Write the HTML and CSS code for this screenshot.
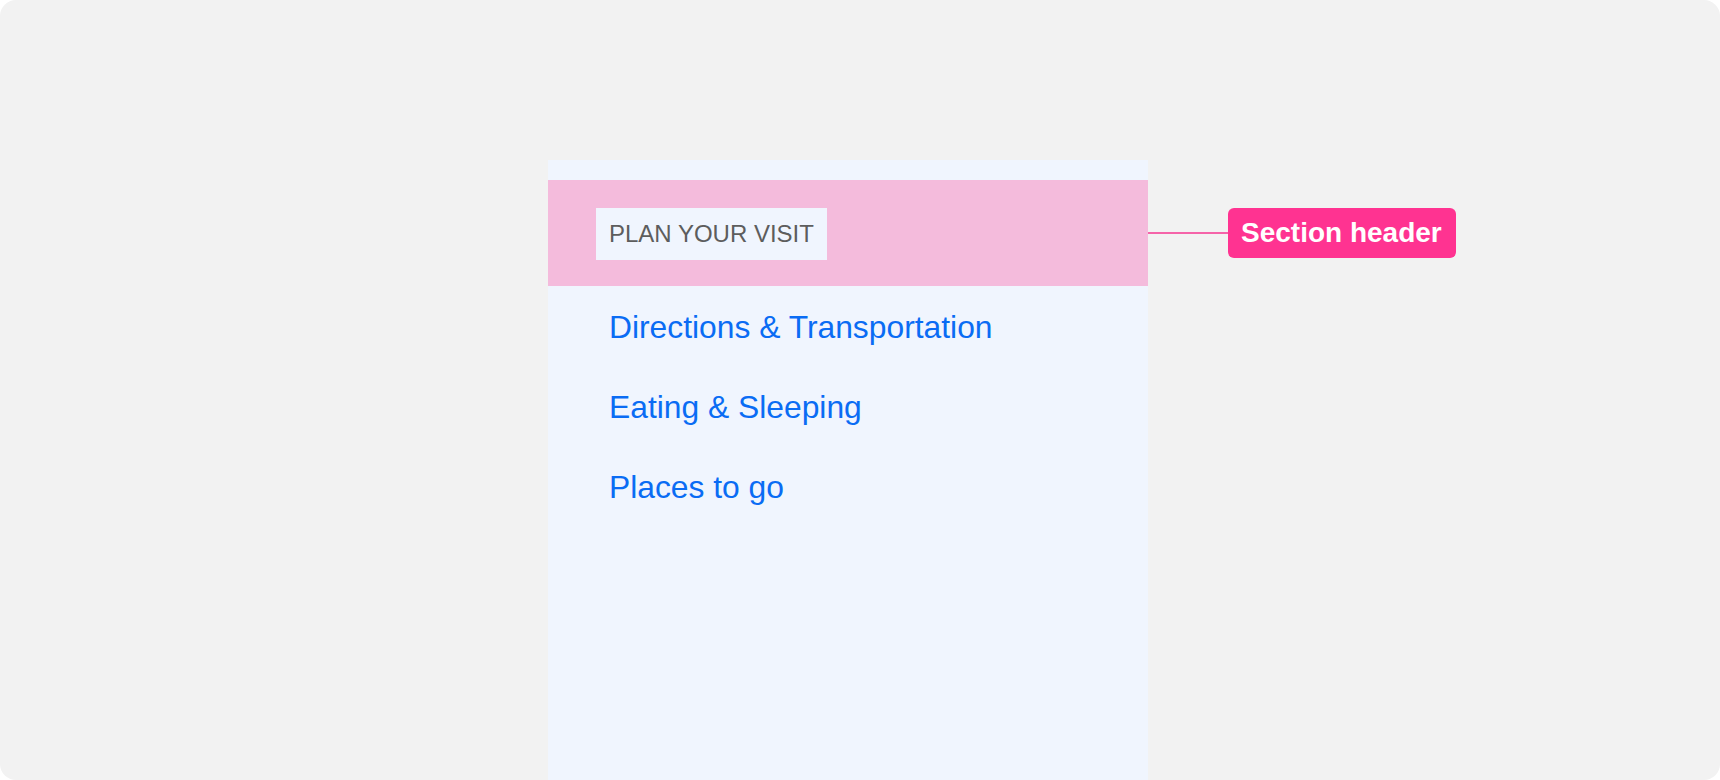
FILE: index.html
```html
<!DOCTYPE html>
<html lang="en">
<head>
<meta charset="utf-8">
<title>Section header</title>
<link rel="stylesheet" href="styles.css">
</head>
<body>
<div class="canvas">
  <div class="panel">
    <div class="section-header">
      <span class="section-label">PLAN YOUR VISIT</span>
    </div>
    <ul class="links">
      <li><a class="link" href="#">Directions &amp; Transportation</a></li>
      <li><a class="link" href="#">Eating &amp; Sleeping</a></li>
      <li><a class="link" href="#">Places to go</a></li>
    </ul>
    <div class="annotation">
      <span class="annotation-line"></span>
      <span class="annotation-badge">Section header</span>
    </div>
  </div>
</div>
</body>
</html>
```

FILE: styles.css
```css
* { box-sizing: border-box; }
html, body {
  margin: 0;
  padding: 0;
  background: #ffffff;
}
body {
  font-family: "Liberation Sans", Arial, sans-serif;
}
.canvas {
  width: 1720px;
  height: 780px;
  background: #f2f2f2;
  border-radius: 16px;
  overflow: hidden;
  padding: 160px 0 0 548px;
}
.panel {
  position: relative;
  width: 600px;
  height: 620px;
  background: #f0f5fe;
  padding-top: 20px;
}
.section-header {
  background: #f4bbdc;
  height: 106px;
  padding: 28px 0 0 48px;
}
.section-label {
  display: inline-block;
  background: #f0f5fe;
  color: #5d5d5d;
  font-size: 24px;
  line-height: 28px;
  padding: 12px 13px;
}
.links {
  list-style: none;
  margin: 0;
  padding: 1px 0 0 61px;
}
.links li {
  height: 80px;
  line-height: 80px;
  font-size: 31.8px;
}
.link {
  color: #0a6cf4;
  text-decoration: none;
}
.annotation {
  position: absolute;
  left: 100%;
  top: 48px;
  display: flex;
  align-items: center;
  white-space: nowrap;
}
.annotation-line {
  flex: 0 0 80px;
  width: 80px;
  height: 2px;
  background: #f564a9;
}
.annotation-badge {
  flex: 0 0 auto;
  background: #ff3391;
  color: #ffffff;
  font-weight: bold;
  font-size: 28px;
  line-height: 32px;
  padding: 9px 14px 9px 13px;
  border-radius: 6px;
}
```
